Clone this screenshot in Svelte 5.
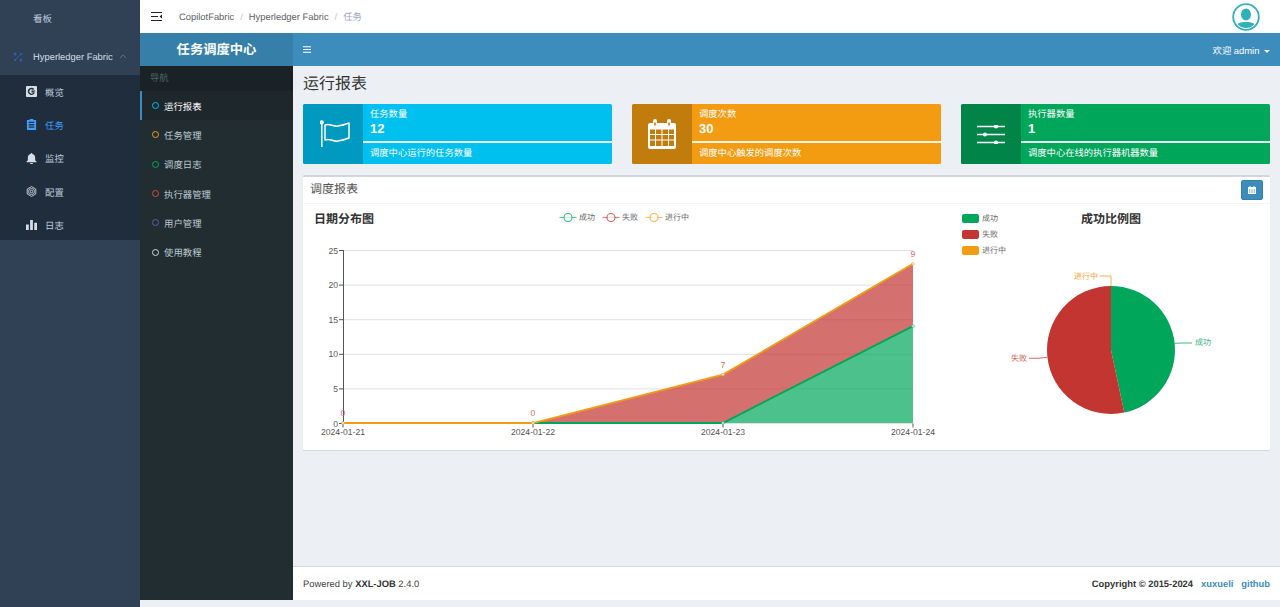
<script>
	const menu = [
		{ label: '概览', icon: 'overview' },
		{ label: '任务', icon: 'task', active: true },
		{ label: '监控', icon: 'bell' },
		{ label: '配置', icon: 'gear' },
		{ label: '日志', icon: 'bars' }
	];
	const nav = [
		{ label: '运行报表', color: '#00c0ef', active: true },
		{ label: '任务管理', color: '#f39c12' },
		{ label: '调度日志', color: '#00a65a' },
		{ label: '执行器管理', color: '#dd4b39' },
		{ label: '用户管理', color: '#605ca8' },
		{ label: '使用教程', color: '#d2d6de' }
	];
	const boxes = [
		{ title: '任务数量', value: 12, desc: '调度中心运行的任务数量', tone: 'info', icon: 'flag' },
		{ title: '调度次数', value: 30, desc: '调度中心触发的调度次数', tone: 'warn', icon: 'calendar' },
		{ title: '执行器数量', value: 1, desc: '调度中心在线的执行器机器数量', tone: 'ok', icon: 'sliders' }
	];

	const xs = [343, 533, 723, 913];
	const y0 = 423;
	const unit = 6.92;
	const success = [0, 0, 0, 14];
	const stacked = [0, 0, 7, 23];
	const fails = [0, 0, 7, 9];
	const py = (v) => y0 - v * unit;
	const line = (vals) => vals.map((v, i) => `${xs[i]},${py(v)}`).join(' ');
	const back = (vals) => vals.map((v, i) => `${xs[i]},${py(v)}`).reverse().join(' ');
	const ticks = [0, 5, 10, 15, 20, 25];
	const dates = ['2024-01-21', '2024-01-22', '2024-01-23', '2024-01-24'];
	const legend = [
		{ label: '成功', color: '#00a65a', x: 559.5 },
		{ label: '失败', color: '#c23531', x: 602.5 },
		{ label: '进行中', color: '#f39c12', x: 645.5 }
	];
</script>

<div class="page">
	<aside class="rail">
		<div class="rail-top">看板</div>
		<div class="rail-group">
			<svg class="cluster" viewBox="0 0 10 10" width="10" height="10">
				<circle cx="2" cy="2" r="1.5" />
				<circle cx="8" cy="2" r="1.2" />
				<circle cx="2" cy="8" r="1.2" />
				<circle cx="8" cy="8" r="1.5" />
				<path d="M2 8 8 2" stroke="#2a5fa8" stroke-width="1" />
			</svg>
			<span>Hyperledger Fabric</span>
			<svg class="chev" viewBox="0 0 10 6" width="8" height="5"><path d="M1 5 5 1l4 4" fill="none" stroke="#6b7a8c" stroke-width="1" /></svg>
		</div>
		<ul class="rail-sub">
			{#each menu as item}
				<li class:on={item.active}>
					<svg viewBox="0 0 12 12" width="11" height="11" fill="currentColor">
						{#if item.icon === 'overview'}
							<path fill-rule="evenodd" d="M1 0h10a1 1 0 0 1 1 1v10a1 1 0 0 1-1 1H1a1 1 0 0 1-1-1V1a1 1 0 0 1 1-1Zm8 3.2A4 4 0 1 0 10 6H8.4A2.4 2.4 0 1 1 7.7 4.300ZM6 5h4v2H6Z" />
						{:else if item.icon === 'task'}
							<path fill-rule="evenodd" d="M1 1h3V0h4v1h3v11H1ZM3 3v1.300h6V3Zm0 2.500V7h6V5.500ZM3 8.200v1.300h6V8.200Z" />
						{:else if item.icon === 'bell'}
							<path d="M6 0a1 1 0 0 1 1 1c2 .5 3 2 3 4v3l1.500 1.500V10H.5v-.5L2 8V5c0-2 1-3.500 3-4a1 1 0 0 1 1-1ZM4.500 11h3a1.500 1.500 0 0 1-3 0Z" />
						{:else if item.icon === 'gear'}
							<g fill="none" stroke="currentColor" stroke-width=".9">
								<path d="M6 .6 10.700 3.300v5.400L6 11.400 1.300 8.700V3.300Z" stroke-linejoin="round" />
								<circle cx="6" cy="6" r="3.300" />
								<circle cx="6" cy="6" r="1.400" />
							</g>
						{:else}
							<path d="M0 6h3v6H0ZM4.500 1h3v11h-3ZM9 4h3v8H9Z" />
						{/if}
					</svg>
					<span>{item.label}</span>
				</li>
			{/each}
		</ul>
	</aside>

	<div class="stage">
		<header class="topbar">
			<svg class="fold" viewBox="0 0 11 9" width="11" height="9">
				<path d="M0 .5h11M0 4.500h7M0 8.500h11" stroke="#222" stroke-width="1.200" />
				<path d="M11 2.500v4L8.500 4.500Z" fill="#222" />
			</svg>
			<nav class="crumbs">
				<span>CopilotFabric</span><i>/</i><span>Hyperledger Fabric</span><i>/</i><span class="now">任务</span>
			</nav>
			<svg class="avatar" viewBox="0 0 28 28" width="28" height="28">
				<clipPath id="face"><circle cx="14" cy="14" r="11" /></clipPath>
				<circle cx="14" cy="14" r="12.800" fill="#fff" stroke="#2fb1b8" stroke-width="1.800" />
				<g clip-path="url(#face)" fill="#2fb1b8">
					<ellipse cx="14" cy="11.500" rx="5" ry="6" />
					<path d="M3 27c0-6 4-8 11-8s11 2 11 8Z" />
				</g>
			</svg>
		</header>

		<div class="frame">
			<div class="bluebar">
				<div class="logo">任务调度中心</div>
				<div class="bar-main">
					<svg viewBox="0 0 8 7" width="8" height="7"><path d="M0 .75h8M0 3.500h8M0 6.250h8" stroke="#fff" stroke-width="1.200" /></svg>
					<div class="user">欢迎 admin <b class="caret"></b></div>
				</div>
			</div>

			<div class="split">
				<aside class="side">
					<div class="side-head">导航</div>
					<ul>
						{#each nav as n}
							<li class:on={n.active}>
								<em style="border-color:{n.color}"></em>
								<span>{n.label}</span>
							</li>
						{/each}
					</ul>
				</aside>

				<div class="main">
					<div class="content">
						<h1>运行报表</h1>
						<div class="boxes">
							{#each boxes as b}
								<div class="box {b.tone}">
									<div class="box-icon">
										{#if b.icon === 'flag'}
											<svg class="flag" viewBox="0 0 30 28" width="30" height="28" fill="none" stroke="#fff" stroke-width="1.500">
												<circle cx="1.800" cy="2.200" r="1.300" fill="#fff" />
												<path d="M1.800 3v24" />
												<path d="M5 5c5-2 8 2 13 1 4-.6 7-1.500 11-3v15c-4 1.500-7 2.400-11 3-5 1-8-3-13-1Z" stroke-linejoin="round" />
											</svg>
										{:else if b.icon === 'calendar'}
											<svg viewBox="0 0 28 30" width="28" height="30">
												<path fill="#fff" fill-rule="evenodd" d="M2 4h3V2a2 2 0 0 1 4 0v2h10V2a2 2 0 0 1 4 0v2h3a2 2 0 0 1 2 2v22a2 2 0 0 1-2 2H2a2 2 0 0 1-2-2V6a2 2 0 0 1 2-2Zm4.200-.5v3h1.600v-3Zm14 0v3h1.600v-3ZM2 10.500v4.500h5v-4.500Zm6 0v4.500h5.500v-4.500Zm6.500 0v4.500H20v-4.500Zm6.500 0v4.500h5v-4.500ZM2 16v4.500h5V16Zm6 0v4.500h5.500V16Zm6.500 0v4.500H20V16Zm6.500 0v4.500h5V16ZM2 21.500V27h5v-5.500Zm6 0V27h5.500v-5.500Zm6.500 0V27H20v-5.500Zm6.500 0V27h5v-5.500Z" />
											</svg>
										{:else}
											<svg viewBox="0 0 28 19" width="28" height="19" fill="#fff">
												<path d="M0 1.500h28M0 9.500h28M0 17.500h28" stroke="#fff" stroke-width="1.600" />
												<circle cx="19" cy="1.500" r="2" />
												<circle cx="8" cy="9.500" r="2" />
												<circle cx="19" cy="17.500" r="2" />
											</svg>
										{/if}
									</div>
									<div class="box-body">
										<div class="box-title">{b.title}</div>
										<div class="box-value">{b.value}</div>
										<div class="box-rule"></div>
										<div class="box-desc">{b.desc}</div>
									</div>
								</div>
							{/each}
						</div>

						<section class="card">
							<div class="card-head">
								<span>调度报表</span>
								<button aria-label="日期">
									<svg viewBox="0 0 8 8" width="8" height="8"><path fill="#fff" fill-rule="evenodd" d="M0 1h1.500V0h1v1h3V0h1v1H8v7H0Zm1 2.500v1h1.300v-1Zm2.300 0v1h1.400v-1Zm2.400 0v1H7v-1ZM1 5.500v1h1.300v-1Zm2.300 0v1h1.400v-1Zm2.400 0v1H7v-1Z" /></svg>
								</button>
							</div>
							<div class="charts">
								<svg class="plot" viewBox="303 204 647 246" width="647" height="246">
									<text class="chart-title" x="314" y="223">日期分布图</text>

									{#each legend as l}
										<path d="M{l.x} 217.500h17" stroke={l.color} stroke-width="1.200" opacity=".6" />
										<circle cx={l.x + 8.500} cy="217.500" r="4" fill="#fff" stroke={l.color} stroke-width="1.100" opacity=".75" />
										<text class="small" x={l.x + 19.500} y="220">{l.label}</text>
									{/each}

									{#each ticks as t}
										<path d="M343 {py(t) + 0.5}H913" stroke="#e0e0e0" stroke-width="1" />
										<path d="M339 {py(t) + 0.5}h4" stroke="#555" stroke-width="1" />
										<text class="axis" x="338" y={py(t) + 3.500} text-anchor="end">{t}</text>
									{/each}
									<path d="M343.500 250V424" stroke="#555" stroke-width="1" />

									<polygon points="{line(stacked)} {back(success)}" fill="#c23531" opacity=".7" />
									<polygon points="{line(success)} 913,{y0} 343,{y0}" fill="#00a65a" opacity=".7" />
									<polyline points={line(success)} fill="none" stroke="#00a65a" stroke-width="1.800" />
									<polyline points={line(stacked)} fill="none" stroke="#f39c12" stroke-width="1.800" />
									{#each xs as x, i}
										<path d="M{x} {y0 + 0.5}v4" stroke="#555" stroke-width="1" />
										<circle cx={x} cy={py(success[i])} r="1.300" fill="#fff" stroke="#3dbb84" stroke-width=".8" />
										<circle cx={x} cy={py(stacked[i])} r="1.300" fill="#fff" stroke="#f3a93a" stroke-width=".8" />
										<text class="val" x={x} y={py(stacked[i]) - 7} text-anchor="middle">{fails[i]}</text>
										<text class="axis" x={x} y="435" text-anchor="middle">{dates[i]}</text>
									{/each}
								</svg>

								<svg class="pie" viewBox="950 204 320 246" width="320" height="246">
									<text class="chart-title" x="1111" y="223" text-anchor="middle">成功比例图</text>

									<rect x="962" y="214" width="17" height="9" rx="2" fill="#00a65a" />
									<text class="small" x="982" y="221">成功</text>
									<rect x="962" y="230" width="17" height="9" rx="2" fill="#c23531" />
									<text class="small" x="982" y="237">失败</text>
									<rect x="962" y="246" width="17" height="9" rx="2" fill="#f39c12" />
									<text class="small" x="982" y="253">进行中</text>

									<path d="M1111 350V286A64 64 0 0 1 1124.300 412.600Z" fill="#00a65a" />
									<path d="M1111 350 1124.300 412.600A64 64 0 1 1 1111 286Z" fill="#c23531" />

									<path d="M1175 343.300 1183 343H1192" fill="none" stroke="#3dbb84" stroke-width="1" />
									<text class="pie-label" x="1195" y="345" fill="#2fb57a">成功</text>
									<path d="M1047 357.300 1038 358.300H1029" fill="none" stroke="#d66a66" stroke-width="1" />
									<text class="pie-label" x="1011" y="360.500" fill="#cf5a56">失败</text>
									<path d="M1111 286V276H1100" fill="none" stroke="#f3b04a" stroke-width="1" />
									<text class="pie-label" x="1074" y="278.500" fill="#f0a22a">进行中</text>
								</svg>
							</div>
						</section>
					</div>

					<footer class="foot">
						<div>Powered by <b>XXL-JOB</b> 2.4.0</div>
						<div class="foot-right"><b>Copyright © 2015-2024</b><a href="#top">xuxueli</a><a href="#top">github</a></div>
					</footer>
				</div>
			</div>
		</div>
	</div>
</div>

<style>
	:global(body) {
		margin: 0;
		background: #ecf0f5;
	}
	.page {
		display: flex;
		height: 607px;
		overflow: hidden;
		font-family: 'Liberation Sans', 'Noto Sans CJK SC', sans-serif;
		font-size: 9.400px;
		text-rendering: geometricPrecision;
		color: #333;
	}
	ul {
		list-style: none;
		margin: 0;
		padding: 0;
	}

	.rail {
		width: 140px;
		flex: none;
		background: #304156;
		color: #bfcbd9;
	}
	.rail-top {
		height: 38px;
		line-height: 38px;
		padding-left: 33px;
	}
	.rail-group {
		height: 37px;
		display: flex;
		align-items: center;
		color: #d5dce5;
		padding: 0 13px;
	}
	.rail-group span {
		margin-left: 10px;
	}
	.cluster {
		fill: #2a5fa8;
	}
	.chev {
		margin-left: auto;
	}
	.rail-sub {
		background: #1f2d3d;
		height: 165px;
	}
	.rail-sub li {
		height: 33.300px;
		display: flex;
		align-items: center;
		padding-left: 26px;
		gap: 8px;
		color: #bfcbd9;
	}
	.rail-sub li svg {
		color: #d8dee6;
	}
	.rail-sub li.on,
	.rail-sub li.on svg {
		color: #409eff;
	}

	.stage {
		flex: 1;
		min-width: 0;
	}
	.topbar {
		height: 33px;
		background: #fff;
		display: flex;
		align-items: center;
		padding: 0 20px 0 11px;
	}
	.crumbs {
		margin-left: 17px;
		color: #606266;
		display: flex;
		gap: 6px;
		line-height: 14px;
	}
	.crumbs i {
		font-style: normal;
		color: #c0c4cc;
	}
	.crumbs .now {
		color: #97a8be;
	}
	.avatar {
		margin-left: auto;
	}

	.frame {
		height: 567px;
		display: flex;
		flex-direction: column;
	}
	.bluebar {
		height: 33px;
		flex: none;
		display: flex;
		background: #3c8dbc;
		color: #fff;
	}
	.logo {
		width: 153px;
		background: #367fa9;
		text-align: center;
		line-height: 33px;
		font-size: 13.300px;
		font-weight: bold;
	}
	.bar-main {
		flex: 1;
		display: flex;
		align-items: center;
		justify-content: space-between;
		padding: 0 10px;
	}
	.caret {
		display: inline-block;
		margin-left: 2px;
		vertical-align: middle;
		border-top: 3px solid #fff;
		border-left: 3px solid transparent;
		border-right: 3px solid transparent;
	}

	.split {
		flex: 1;
		display: flex;
		min-height: 0;
	}
	.side {
		width: 153px;
		flex: none;
		background: #222d32;
		color: #b8c7ce;
	}
	.side-head {
		height: 25px;
		line-height: 25px;
		padding-left: 10px;
		background: #1a2226;
		color: #4b646f;
		font-size: 9.300px;
	}
	.side li {
		height: 29.300px;
		display: flex;
		align-items: center;
		padding-left: 10px;
		gap: 5px;
		border-left: 2px solid transparent;
		font-size: 9.400px;
	}
	.side li.on {
		background: #1e282c;
		border-left-color: #3c8dbc;
		color: #fff;
	}
	.side em {
		flex: none;
		width: 5px;
		height: 5px;
		border: 1.800px solid;
		border-radius: 50%;
	}

	.main {
		flex: 1;
		min-width: 0;
		display: flex;
		flex-direction: column;
		background: #ecf0f5;
	}
	.content {
		flex: 1;
		padding: 0 10px;
	}
	h1 {
		margin: 0;
		height: 38px;
		line-height: 38px;
		font-size: 16px;
		font-weight: 400;
	}
	.boxes {
		display: grid;
		grid-template-columns: repeat(3, 1fr);
		gap: 20px;
	}
	.box {
		height: 60px;
		display: flex;
		color: #fff;
		border-radius: 1.500px;
		overflow: hidden;
	}
	.box.info {
		background: #00c0ef;
	}
	.box.warn {
		background: #f39c12;
	}
	.box.ok {
		background: #00a65a;
	}
	.box-icon {
		width: 60px;
		flex: none;
		display: flex;
		align-items: center;
		justify-content: center;
		background: rgba(0, 0, 0, 0.2);
	}
	.flag {
		margin-left: 4px;
	}
	.box-body {
		flex: 1;
		font-size: 9.300px;
	}
	.box-title {
		height: 17px;
		line-height: 20px;
		padding-left: 7px;
	}
	.box-value {
		height: 20px;
		line-height: 16px;
		padding-left: 7px;
		font-size: 13px;
		font-weight: bold;
	}
	.box-rule {
		height: 2px;
		background: rgba(255, 255, 255, 0.9);
	}
	.box-desc {
		padding-left: 7px;
		line-height: 20px;
	}

	.card {
		margin-top: 11px;
		height: 275px;
		box-sizing: border-box;
		background: #fff;
		border-top: 2px solid #d2d6de;
		border-radius: 1.500px;
		box-shadow: 0 1px 1px rgba(0, 0, 0, 0.1);
	}
	.card-head {
		height: 26px;
		display: flex;
		align-items: center;
		justify-content: space-between;
		padding: 0 7px;
		border-bottom: 1px solid #f4f4f4;
		font-size: 12px;
		color: #555;
	}
	.card-head span {
		margin-top: -4px;
	}
	.card-head button {
		width: 22px;
		height: 20px;
		padding: 0;
		background: #3c8dbc;
		border: 1px solid #367fa9;
		border-radius: 2px;
		display: flex;
		align-items: center;
		justify-content: center;
	}
	.charts {
		display: flex;
	}
	.charts svg {
		display: block;
	}
	.chart-title {
		font-size: 12px;
		font-weight: bold;
		fill: #333;
	}
	.small {
		font-size: 8px;
		fill: #666;
	}
	.axis {
		font-size: 8.600px;
		fill: #555;
	}
	.val {
		font-size: 8.600px;
		fill: #d66a66;
	}
	.pie-label {
		font-size: 8px;
	}

	.foot {
		height: 34px;
		flex: none;
		box-sizing: border-box;
		background: #fff;
		border-top: 1px solid #d2d6de;
		display: flex;
		align-items: center;
		justify-content: space-between;
		padding: 0 10px;
		color: #444;
	}
	.foot b {
		color: #333;
	}
	.foot-right {
		display: flex;
		gap: 8px;
	}
	.foot a {
		color: #3c8dbc;
		font-weight: bold;
		text-decoration: none;
	}
</style>
